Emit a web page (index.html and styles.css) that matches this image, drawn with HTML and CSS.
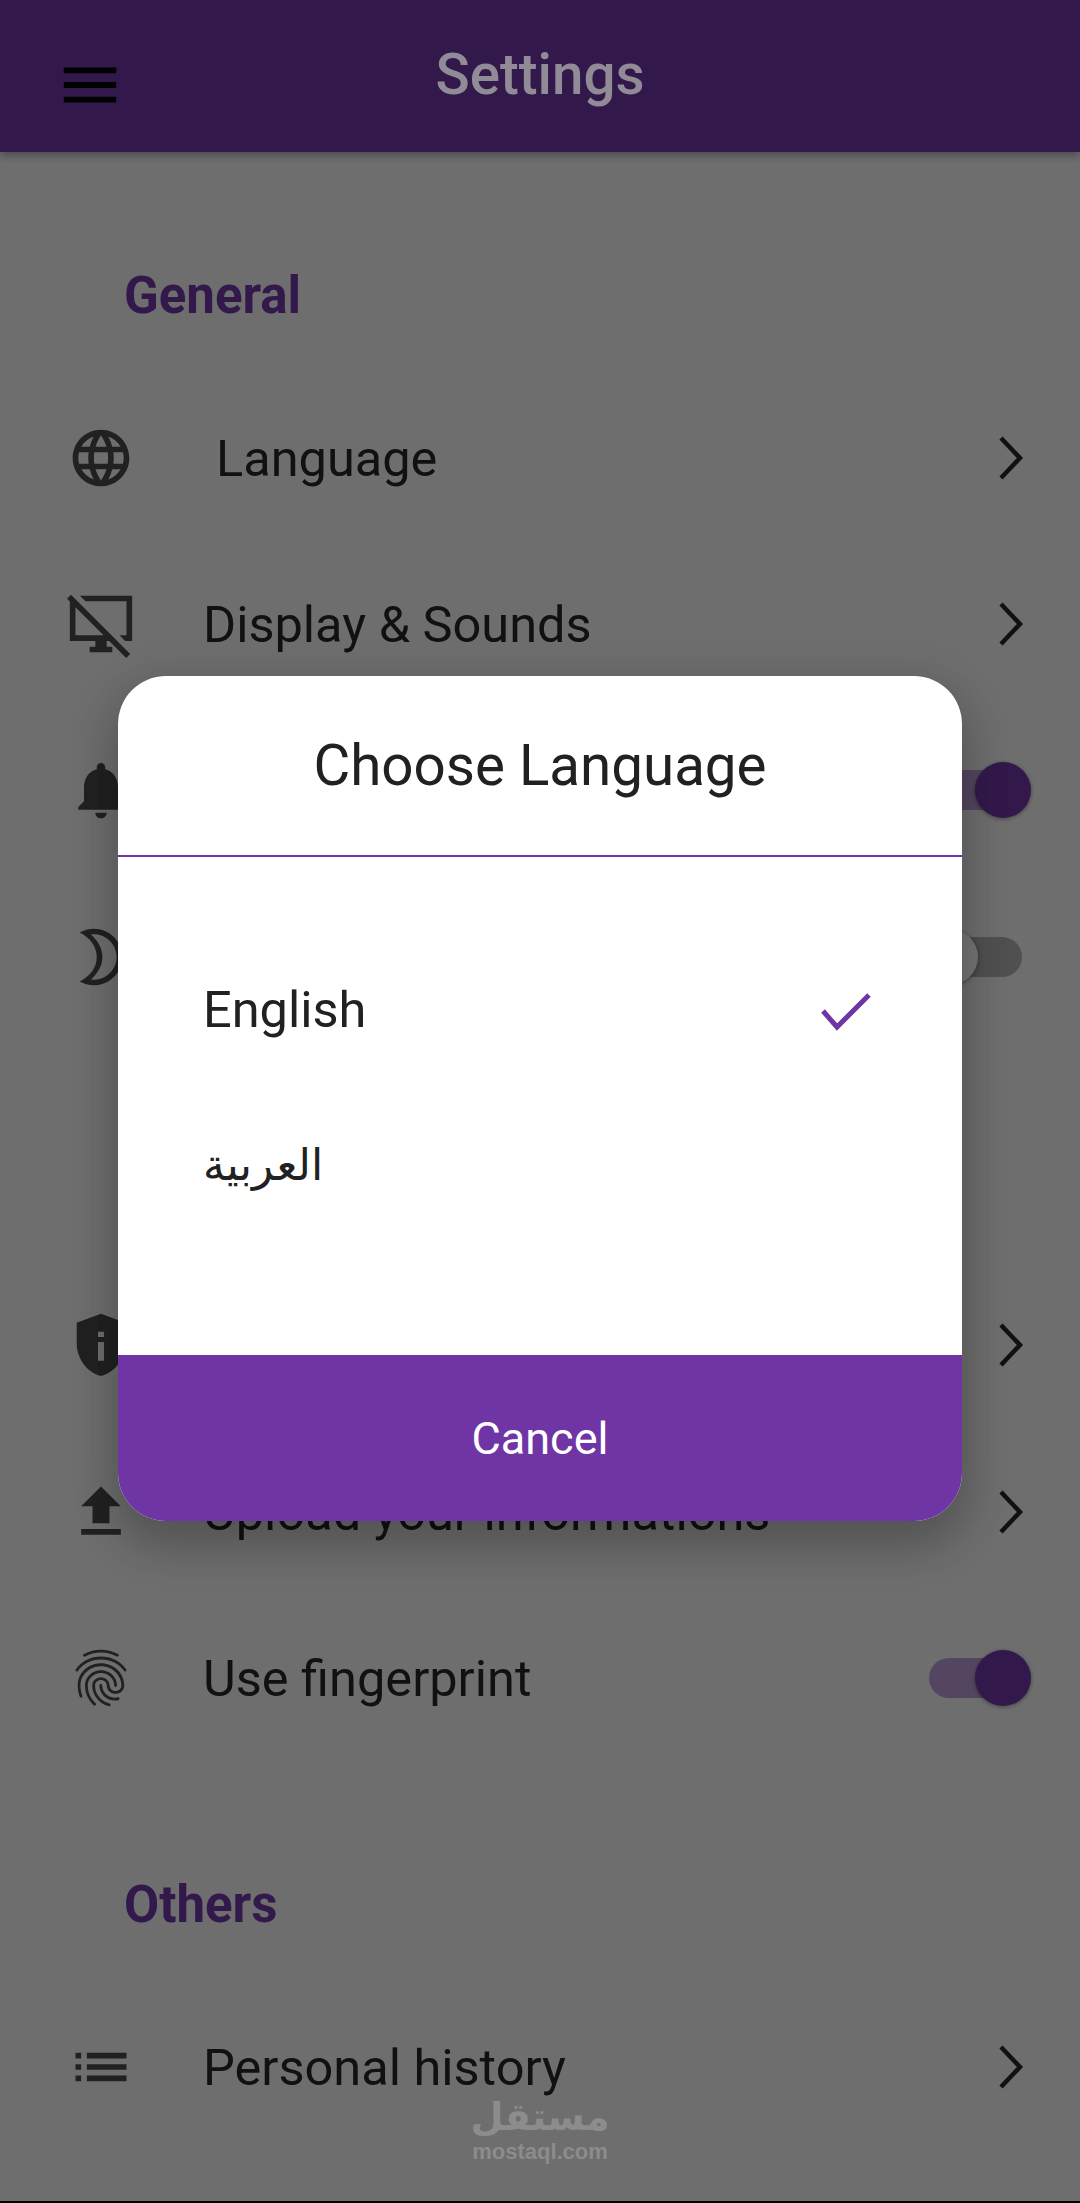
FILE: index.html
```html
<!DOCTYPE html>
<html lang="en">

<head>
    <meta charset="utf-8">
    <title>Settings</title>
    <meta name="viewport" content="width=device-width, initial-scale=1">
    <link rel="stylesheet" href="styles.css">
</head>

<body>

    <div class="screen">
        <header class="app-bar">
            <svg class="menu-icon" viewBox="0 0 24 24"><path d="M3 18h18v-2H3v2zm0-5h18v-2H3v2zm0-7v2h18V6H3z"/></svg>
            <h1 class="app-title">Settings</h1>
        </header>

        <main>
            <section class="settings-group">
                <h2 class="group-title">General</h2>
                <div class="setting-row">
                    <svg class="row-icon" viewBox="0 0 24 24"><path d="M11.99 2C6.47 2 2 6.48 2 12s4.47 10 9.99 10C17.52 22 22 17.52 22 12S17.52 2 11.99 2zm6.93 6h-2.95c-.32-1.25-.78-2.45-1.38-3.56 1.84.63 3.37 1.91 4.33 3.56zM12 4.04c.83 1.2 1.48 2.53 1.91 3.96h-3.82c.43-1.43 1.08-2.76 1.91-3.96zM4.26 14C4.1 13.36 4 12.69 4 12s.1-1.36.26-2h3.38c-.08.66-.14 1.32-.14 2 0 .68.06 1.34.14 2H4.26zm.82 2h2.95c.32 1.25.78 2.45 1.38 3.56-1.84-.63-3.37-1.9-4.33-3.56zm2.95-8H5.08c.96-1.66 2.49-2.93 4.33-3.56C8.81 5.55 8.35 6.75 8.03 8zM12 19.96c-.83-1.2-1.48-2.53-1.91-3.96h3.82c-.43 1.43-1.08 2.76-1.91 3.96zM14.34 14H9.66c-.09-.66-.16-1.32-.16-2 0-.68.07-1.35.16-2h4.68c.09.65.16 1.32.16 2 0 .68-.07 1.34-.16 2zm.25 5.56c.6-1.11 1.06-2.31 1.38-3.56h2.95c-.96 1.65-2.49 2.93-4.33 3.56zM16.36 14c.08-.66.14-1.32.14-2 0-.68-.06-1.34-.14-2h3.38c.16.64.26 1.31.26 2s-.1 1.36-.26 2h-3.38z"/></svg>
                    <span class="row-label row-label-indented">Language</span>
                    <svg class="chevron" viewBox="0 0 26 46"><polyline points="3,3 22,23 3,43"/></svg>
                </div>
                <div class="setting-row">
                    <svg class="row-icon" viewBox="0 0 24 24"><path d="M1.41 1.69L0 3.1l1 .99V18h9v2H8v2h8v-2h-2v-2h.9l6 6 1.41-1.41-20.9-20.9zM2.99 16V6.09L12.9 16H2.99zM4.55 2l2 2H21v12h-2.45l2 2H23V2H4.55z"/></svg>
                    <span class="row-label">Display &amp; Sounds</span>
                    <svg class="chevron" viewBox="0 0 26 46"><polyline points="3,3 22,23 3,43"/></svg>
                </div>
                <!-- labels of the next rows are covered by the dialog -->
                <div class="setting-row">
                    <svg class="row-icon" viewBox="0 0 24 24"><path d="M12 22c1.1 0 2-.9 2-2h-4c0 1.1.89 2 2 2zm6-6v-5c0-3.07-1.64-5.64-4.5-6.32V4c0-.83-.67-1.5-1.5-1.5s-1.5.67-1.5 1.5v.68C7.63 5.36 6 7.92 6 11v5l-2 2v1h16v-1l-2-2z"/></svg>
                    <span class="row-label"></span>
                    <span class="switch switch-on"></span>
                </div>
                <div class="setting-row">
                    <svg class="row-icon" viewBox="0 0 24 24"><path d="M9.5 4c4.41 0 8 3.59 8 8s-3.59 8-8 8c-.34 0-.68-.02-1.01-.07C10.9 17.77 12.5 14.95 12.5 12s-1.6-5.77-4.01-7.93C8.82 4.02 9.16 4 9.5 4m0-2c-1.82 0-3.53.5-5 1.35C7.99 5.08 10.5 8.24 10.5 12s-2.51 6.92-6 8.65c1.47.85 3.18 1.35 5 1.35 5.52 0 10-4.48 10-10S15.02 2 9.5 2z"/></svg>
                    <span class="row-label"></span>
                    <span class="switch"></span>
                </div>
            </section>

            <section class="settings-group">
                <div class="group-title"></div>
                <div class="setting-row">
                    <svg class="row-icon" viewBox="0.8 0.6 22.4 22.4"><path fill-rule="evenodd" d="M12 1.5L4 4.5v6.6c0 5.05 3.41 9.76 8 10.9 4.59-1.14 8-5.85 8-10.9V4.5l-8-3zM11 7.4h2v1.8h-2zM11 10.8h2V17h-2z"/></svg>
                    <span class="row-label"></span>
                    <svg class="chevron" viewBox="0 0 26 46"><polyline points="3,3 22,23 3,43"/></svg>
                </div>
                <div class="setting-row">
                    <svg class="row-icon" viewBox="0 0 24 24"><path d="M9 16h6v-6h4l-7-7-7 7h4zm-4 2h14v2H5z"/></svg>
                    <span class="row-label">Upload your informations</span>
                    <svg class="chevron" viewBox="0 0 26 46"><polyline points="3,3 22,23 3,43"/></svg>
                </div>
                <div class="setting-row">
                    <svg class="row-icon" viewBox="0 0 24 24"><path d="M17.81 4.47c-.08 0-.16-.02-.23-.06C15.66 3.42 14 3 12.01 3c-1.98 0-3.86.47-5.57 1.41-.24.13-.54.04-.68-.2-.13-.24-.04-.55.2-.68C7.82 2.52 9.86 2 12.01 2c2.13 0 3.99.47 6.03 1.52.25.13.34.43.21.67-.09.18-.26.28-.44.28zM3.5 9.72c-.1 0-.2-.03-.29-.09-.23-.16-.28-.47-.12-.7.99-1.4 2.25-2.5 3.75-3.27C9.98 4.04 14 4.03 17.15 5.65c1.5.77 2.76 1.86 3.75 3.25.16.22.11.54-.12.7-.23.16-.54.11-.7-.12-.9-1.26-2.04-2.25-3.39-2.94-2.87-1.47-6.54-1.47-9.4.01-1.36.7-2.5 1.7-3.4 2.96-.08.14-.23.21-.39.21zm6.25 12.07c-.13 0-.26-.05-.35-.15-.87-.87-1.34-1.43-2.01-2.64-.69-1.23-1.05-2.73-1.05-4.34 0-2.97 2.54-5.39 5.66-5.39s5.66 2.42 5.66 5.39c0 .28-.22.5-.5.5s-.5-.22-.5-.5c0-2.42-2.09-4.39-4.66-4.39s-4.66 1.97-4.66 4.39c0 1.44.32 2.77.93 3.85.64 1.15 1.08 1.64 1.85 2.42.19.2.19.51 0 .71-.11.1-.24.15-.37.15zm7.17-1.85c-1.19 0-2.24-.3-3.1-.89-1.49-1.01-2.38-2.65-2.38-4.39 0-.28.22-.5.5-.5s.5.22.5.5c0 1.41.72 2.74 1.94 3.56.71.48 1.54.71 2.54.71.24 0 .64-.03 1.04-.1.27-.05.53.13.58.41.05.27-.13.53-.41.58-.57.11-1.07.12-1.21.12zM14.91 22c-.04 0-.09-.01-.13-.02-1.59-.44-2.63-1.03-3.72-2.1-1.4-1.39-2.17-3.24-2.17-5.22 0-1.62 1.38-2.94 3.08-2.94 1.7 0 3.08 1.32 3.08 2.94 0 1.07.93 1.94 2.08 1.94s2.08-.87 2.08-1.94c0-3.77-3.25-6.83-7.25-6.83-2.84 0-5.44 1.58-6.61 4.03-.39.81-.59 1.76-.59 2.8 0 .78.07 2.01.67 3.61.1.26-.03.55-.29.64-.26.1-.55-.04-.64-.29-.49-1.31-.73-2.61-.73-3.96 0-1.2.23-2.29.68-3.24 1.33-2.79 4.28-4.6 7.51-4.6 4.55 0 8.25 3.51 8.25 7.83 0 1.62-1.38 2.94-3.08 2.94s-3.08-1.32-3.08-2.94c0-1.07-.93-1.94-2.08-1.94s-2.08.87-2.08 1.94c0 1.71.66 3.31 1.87 4.51.95.94 1.86 1.46 3.27 1.85.27.07.42.35.35.61-.05.23-.26.38-.47.38z"/></svg>
                    <span class="row-label">Use fingerprint</span>
                    <span class="switch switch-on"></span>
                </div>
            </section>

            <section class="settings-group">
                <h2 class="group-title">Others</h2>
                <div class="setting-row">
                    <svg class="row-icon" viewBox="0 0 24 24"><path d="M3 13h2v-2H3v2zm0 4h2v-2H3v2zm0-8h2V7H3v2zm4 4h14v-2H7v2zm0 4h14v-2H7v2zM7 7v2h14V7H7z"/></svg>
                    <span class="row-label">Personal history</span>
                    <svg class="chevron" viewBox="0 0 26 46"><polyline points="3,3 22,23 3,43"/></svg>
                </div>
            </section>
        </main>

        <!-- dimmed layer behind the dialog -->
        <div class="scrim"></div>

        <section class="language-dialog">
            <h2 class="dialog-title">Choose Language</h2>
            <div class="dialog-options">
                <div class="language-option">
                    <span>English</span>
                    <svg class="check-icon" viewBox="0 0 52 40"><polyline points="3,19 17,35 49,3"/></svg>
                </div>
                <div class="language-option">
                    <span class="language-arabic" lang="ar">العربية</span>
                </div>
            </div>
            <button class="dialog-cancel" type="button">Cancel</button>
        </section>

        <div class="watermark">
            <span class="watermark-ar" lang="ar">مستقل</span>
            <span class="watermark-en">mostaql.com</span>
        </div>
    </div>

</body>

</html>
```

FILE: styles.css
```css
* {
    margin: 0;
    padding: 0;
    box-sizing: border-box;
}

body {
    font-family: Roboto, "DejaVu Sans", sans-serif;
    background-color: #000;
}

.screen {
    position: relative;
    width: 1080px;
    height: 2203px;
    overflow: hidden;
    border-bottom: 2px solid #000;
    background-color: #f0f0f0;
}

/** App bar **/
.app-bar {
    display: flex;
    height: 152px;
    padding-left: 55px;
    background-color: #6f35a5;
    box-shadow: 0 4px 8px rgba(0, 0, 0, 0.3);
}

.menu-icon {
    flex: none;
    width: 70px;
    height: 70px;
    margin-top: 50px;
    fill: #000;
}

.app-title {
    position: relative;
    z-index: 2;
    flex: 1;
    margin-left: -125px;
    padding-top: 46px;
    font-size: 56.5px;
    font-weight: 500;
    line-height: 58px;
    text-align: center;
    color: #918b97;
}

/** Settings list **/
.settings-group {
    padding-top: 114.5px;
}

.group-title {
    height: 58px;
    margin-bottom: 50px;
    padding-left: 124px;
    font-size: 51px;
    font-weight: 700;
    line-height: 58px;
    color: #6f35a5;
}

.setting-row {
    display: flex;
    align-items: center;
    height: 166.3px;
    padding: 0 56px 0 67px;
}

.row-icon {
    flex: none;
    width: 68px;
    height: 68px;
    fill: #484848;
}

.row-label {
    flex: 1;
    margin-left: 68px;
    padding-top: 2px;
    font-size: 50.5px;
    color: #262626;
}

.row-label-indented {
    margin-left: 81px;
}

.chevron {
    flex: none;
    width: 26px;
    height: 46px;
    fill: none;
    stroke: #262626;
    stroke-width: 4.5;
}

/** Switches, thumb sits over the track **/
.switch {
    position: relative;
    flex: none;
    width: 93px;
    height: 40px;
    margin-right: 2px;
    border-radius: 20px;
    background-color: #aeaeae;
}

.switch::after {
    content: "";
    position: absolute;
    top: -8px;
    left: -7px;
    width: 56px;
    height: 56px;
    border-radius: 50%;
    background-color: #fff;
    box-shadow: 0 1px 4px rgba(0, 0, 0, 0.4);
}

.switch-on {
    background-color: #b79ad2;
}

.switch-on::after {
    left: auto;
    right: -9px;
    background-color: #6f35a5;
}

.scrim {
    position: absolute;
    top: 0;
    right: 0;
    bottom: 0;
    left: 0;
    z-index: 1;
    background-color: rgba(0, 0, 0, 0.54);
}

/** Language dialog **/
.language-dialog {
    position: absolute;
    top: 676px;
    left: 118px;
    z-index: 3;
    display: flex;
    flex-direction: column;
    width: 844px;
    height: 845px;
    border-radius: 48px;
    background-color: #fff;
    box-shadow: 0 26px 44px 3px rgba(0, 0, 0, 0.16), 0 9px 46px 8px rgba(0, 0, 0, 0.1);
}

.dialog-title {
    flex: none;
    height: 181px;
    border-bottom: 2px solid #6f35a5;
    font-size: 56.5px;
    font-weight: 400;
    line-height: 181px;
    text-align: center;
    color: #212121;
}

.dialog-options {
    flex: 1;
    padding: 74px 90px 0 85px;
}

.language-option {
    display: flex;
    align-items: center;
    justify-content: space-between;
    height: 156px;
    font-size: 50.5px;
    color: #212121;
}

.language-arabic {
    font-size: 44px;
}

.check-icon {
    width: 52px;
    height: 40px;
    margin-top: 6px;
    fill: none;
    stroke: #6f35a5;
    stroke-width: 5;
}

.dialog-cancel {
    flex: none;
    height: 166px;
    border: 0;
    border-radius: 0 0 48px 48px;
    font-family: Roboto, sans-serif;
    font-size: 45px;
    color: #fff;
    background-color: #6f35a5;
}

/** Watermark **/
.watermark {
    position: absolute;
    top: 2092px;
    left: 475px;
    z-index: 4;
    display: flex;
    flex-direction: column;
    align-items: center;
    width: 130px;
    color: #8c8c8c;
}

.watermark-ar {
    font-family: "DejaVu Sans", sans-serif;
    font-size: 38px;
    font-weight: 700;
    line-height: 50px;
}

.watermark-en {
    font-family: "Liberation Sans", sans-serif;
    font-size: 22px;
    font-weight: 700;
    line-height: 20px;
}
```
